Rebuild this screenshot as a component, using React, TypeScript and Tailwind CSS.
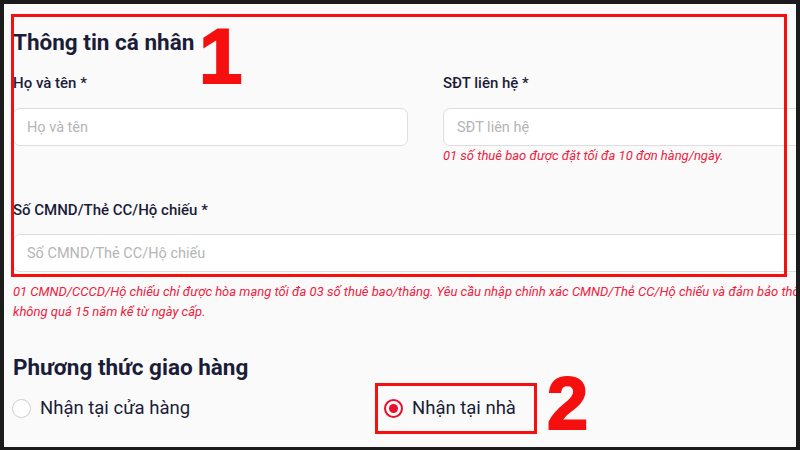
import React from "react";

const navy = "text-[#1b1d38]";

function Field({
  label,
  placeholder,
  hint,
}: {
  label: string;
  placeholder: string;
  hint?: string;
}) {
  return (
    <div>
      <label className={`block text-[15px] leading-[20px] font-medium ${navy}`}>{label}</label>
      <input
        readOnly
        placeholder={placeholder}
        className="mt-[15px] block w-full h-[38px] rounded-[7px] border border-[#dedede] bg-white px-[13px] text-[14.5px] outline-none placeholder:text-[#b5b5b5]"
      />
      {hint && (
        <p className="mt-px text-[13px] leading-[18px] italic text-[#ee2140]">{hint}</p>
      )}
    </div>
  );
}

function Radio({ label, checked }: { label: string; checked?: boolean }) {
  return (
    <div className="flex items-center gap-[9px]">
      {checked ? (
        <span className="flex items-center justify-center w-[19px] h-[19px] rounded-full border-[2px] border-[#e8102c]">
          <span className="w-[9px] h-[9px] rounded-full bg-[#e8102c]" />
        </span>
      ) : (
        <span className="w-[19px] h-[19px] rounded-full border-[1.5px] border-[#cfcfcf] bg-white" />
      )}
      <span className={`text-[18.5px] leading-[24px] ${navy}`}>{label}</span>
    </div>
  );
}

export default function App() {
  return (
    <div className="w-[800px] h-[450px] bg-[#1b1b1b] pt-[4px] pl-[4px] pr-[4px] pb-[3px]">
      <div className="relative h-full overflow-hidden bg-[#fafafa] pl-[9px] pt-[24px] font-['Roboto',sans-serif]">
        <h2 className={`text-[22.5px] leading-[28px] font-bold ${navy}`}>Thông tin cá nhân</h2>

        <div className="mt-[17px] grid grid-cols-[395px_395px] gap-x-[35px] w-[825px]">
          <Field label="Họ và tên *" placeholder="Họ và tên" />
          <Field
            label="SĐT liên hệ *"
            placeholder="SĐT liên hệ"
            hint="01 số thuê bao được đặt tối đa 10 đơn hàng/ngày."
          />
        </div>

        <div className="mt-[35px] w-[825px]">
          <label className={`block text-[15px] leading-[20px] font-medium ${navy}`}>
            Số CMND/Thẻ CC/Hộ chiếu *
          </label>
          <input
            readOnly
            placeholder="Số CMND/Thẻ CC/Hộ chiếu"
            className="mt-[14px] block w-full h-[38px] rounded-[7px] border border-[#dedede] bg-white px-[13px] text-[14.5px] outline-none placeholder:text-[#b5b5b5]"
          />
        </div>

        <div className="mt-[10px] w-[1000px] text-[13px] leading-[20px] italic text-[#ee2140] whitespace-nowrap">
          <p>
            01 CMND/CCCD/Hộ chiếu chỉ được hòa mạng tối đa 03 số thuê bao/tháng. Yêu cầu nhập chính xác
            CMND/Thẻ CC/Hộ chiếu và đảm bảo thông tin giấy tờ còn hiệu lực,
          </p>
          <p>không quá 15 năm kể từ ngày cấp.</p>
        </div>

        <h2 className={`mt-[31px] text-[22.5px] leading-[28px] font-bold ${navy}`}>
          Phương thức giao hàng
        </h2>

        <div className="mt-[15px] flex -ml-px">
          <div className="w-[372px]">
            <Radio label="Nhận tại cửa hàng" />
          </div>
          <Radio label="Nhận tại nhà" checked />
        </div>

        {/* annotations */}
        <div className="absolute left-[7px] top-[10px] w-[776px] h-[263px] border-[3px] border-[#f50f0f]" />
        <div className="absolute left-[195px] top-[13px] text-[78px] leading-none font-bold text-[#f50f0f] font-['Liberation_Sans',sans-serif] [-webkit-text-stroke:2px_#f50f0f]">
          1
        </div>
        <div className="absolute left-[371px] top-[379px] w-[162px] h-[51px] border-[3px] border-[#f50f0f]" />
        <div className="absolute left-[543px] top-[363px] text-[74px] leading-none font-bold text-[#f50f0f] font-['Liberation_Sans',sans-serif] [-webkit-text-stroke:2px_#f50f0f]">
          2
        </div>
      </div>
    </div>
  );
}
